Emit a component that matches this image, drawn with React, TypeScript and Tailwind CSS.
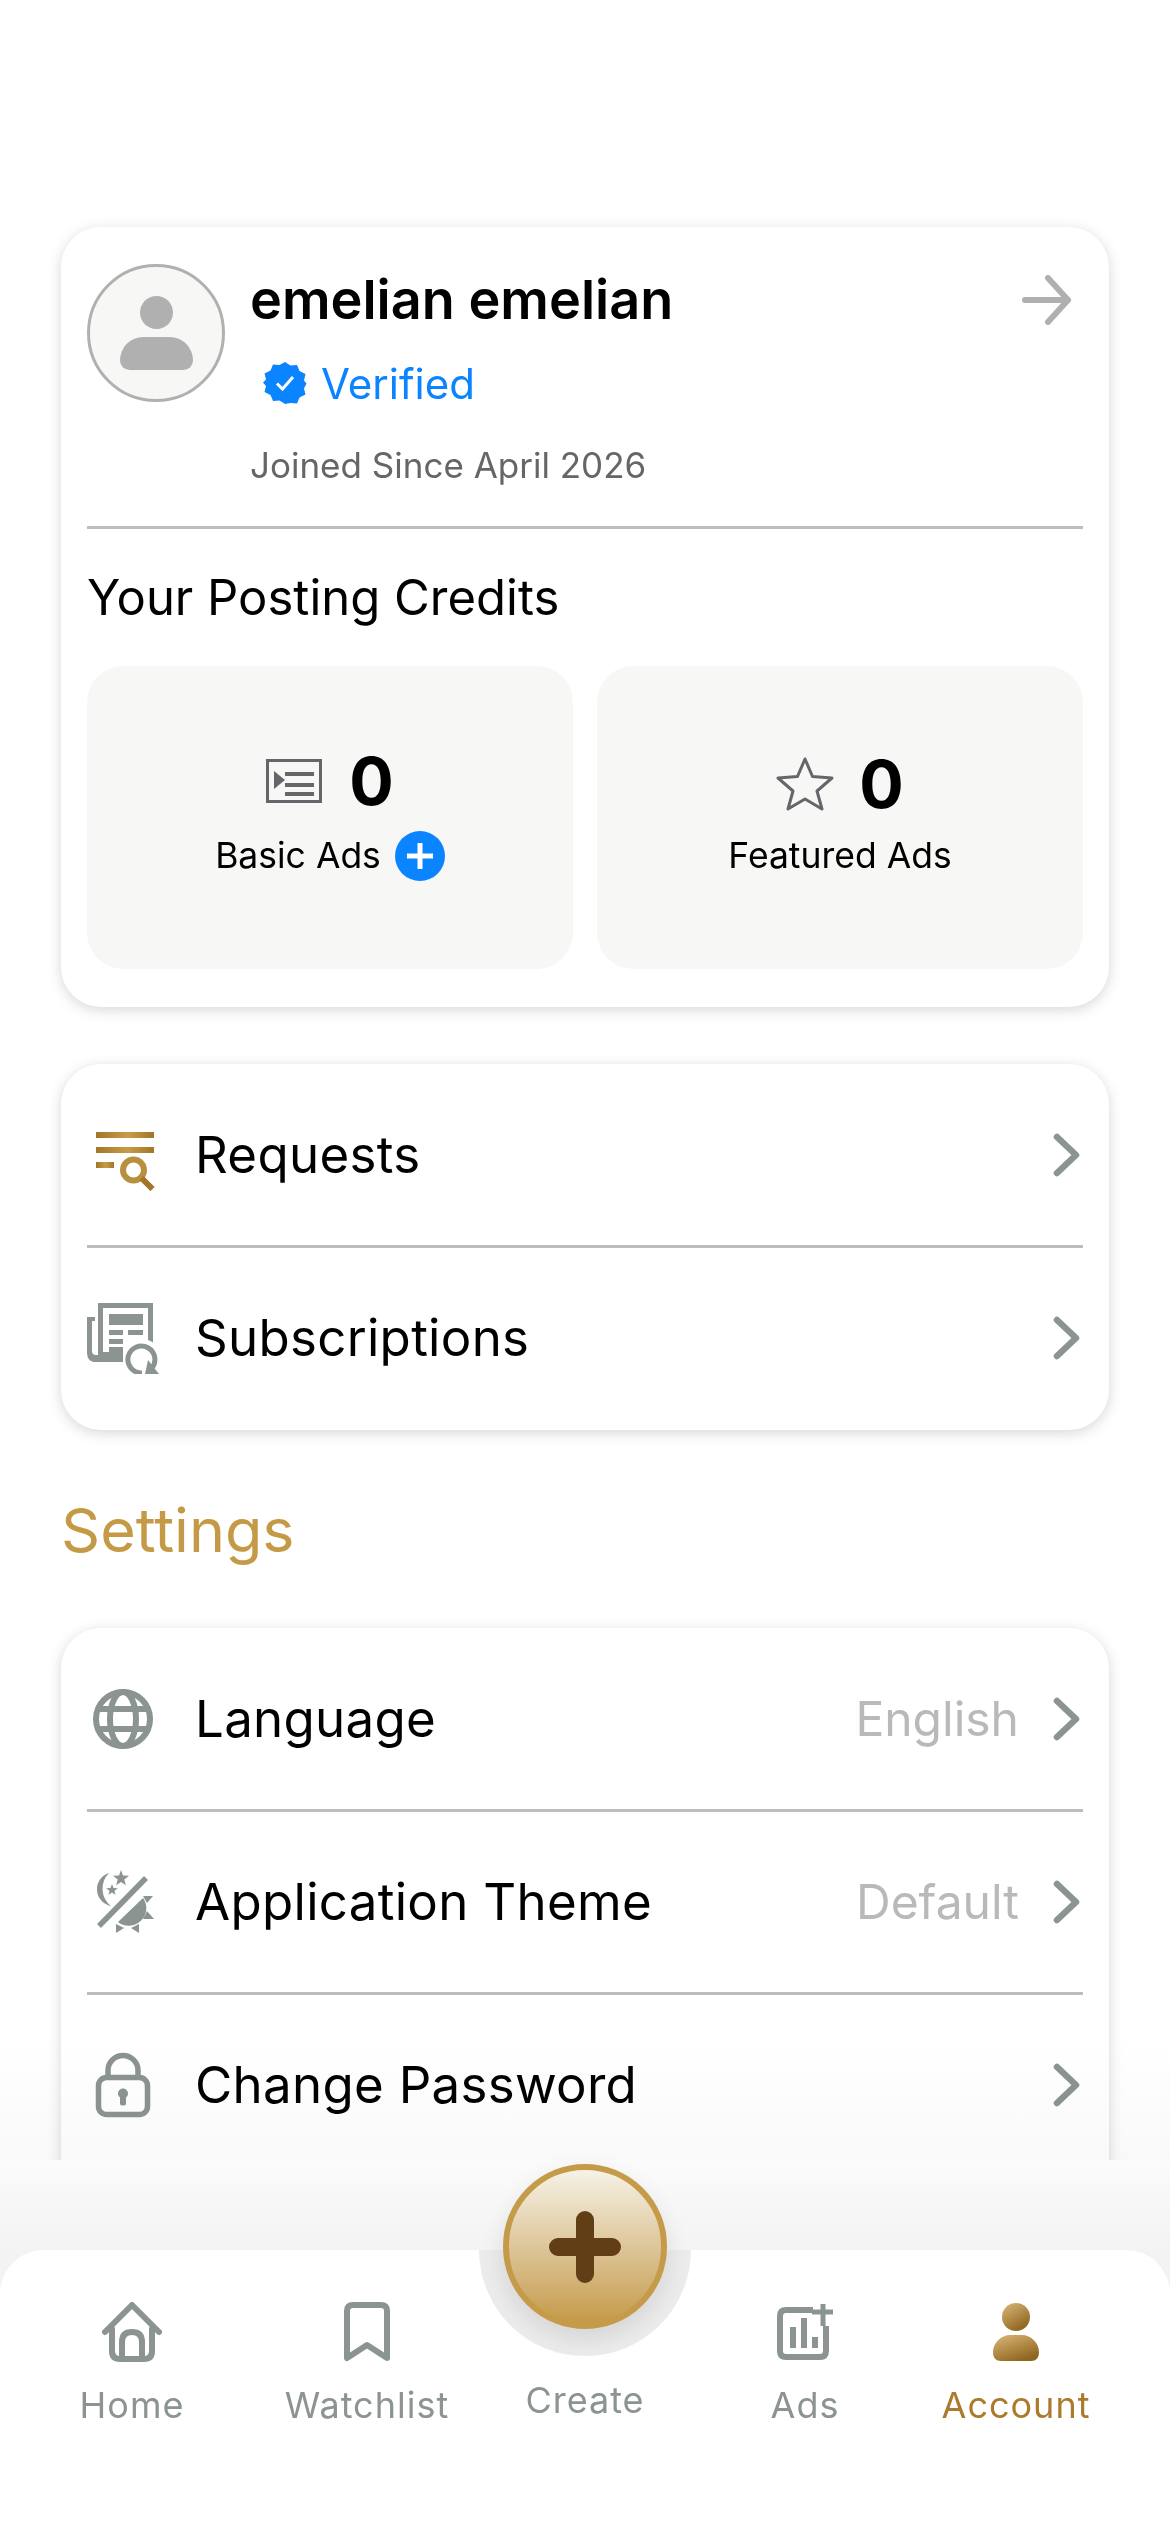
import type { ReactNode } from "react";

const font = "font-['Inter','Noto_Sans',sans-serif]";

function GoldDefs({ id, from, to }: { id: string; from: string; to: string }) {
  return (
    <defs>
      <linearGradient id={id} x1="0" y1="0" x2="0.6" y2="1">
        <stop offset="0" stopColor={from} />
        <stop offset="1" stopColor={to} />
      </linearGradient>
    </defs>
  );
}

function RequestsIcon() {
  return (
    <svg width="72" height="72" viewBox="0 0 72 72">
      <defs>
        <linearGradient id="reqGold" x1="0" y1="0" x2="1" y2="0">
          <stop offset="0" stopColor="#a27528" />
          <stop offset="0.55" stopColor="#c69c49" />
          <stop offset="1" stopColor="#a27528" />
        </linearGradient>
      </defs>
      <rect x="9" y="13" width="58" height="6" fill="url(#reqGold)" />
      <rect x="9" y="28" width="58" height="6" fill="url(#reqGold)" />
      <rect x="9" y="43" width="18" height="6" fill="url(#reqGold)" />
      <circle cx="46.5" cy="51" r="15.5" fill="#fff" />
      <circle cx="46.5" cy="51" r="10.5" fill="none" stroke="#b88f3d" strokeWidth="6" />
      <path d="M54.5 59l11 11" stroke="#a27528" strokeWidth="6" fill="none" />
    </svg>
  );
}

function SubscriptionsIcon() {
  return (
    <svg width="72" height="72" viewBox="0 0 72 72" fill="#8b9490">
      <path d="M11 1h55v40H61V6H16v44h20v5H11z" />
      <path d="M0 15h8v4H5v30q0 4 4 4h2v7H9q-9 0-9-9z" />
      <rect x="6" y="55" width="30" height="5" />
      <rect x="22" y="12" width="34" height="11" />
      <rect x="22" y="28" width="14" height="5" />
      <rect x="41" y="28" width="15" height="5" />
      <rect x="22" y="37" width="14" height="5" />
      <rect x="22" y="45" width="14" height="5" />
      <circle cx="55" cy="56" r="19" fill="#fff" />
      <path d="M64 67a13.5 13.5 0 1 0-9 4" fill="none" stroke="#8b9490" strokeWidth="5" />
      <path d="M61 58l11 14H58z" />
    </svg>
  );
}

function GlobeIcon() {
  return (
    <svg width="72" height="72" viewBox="0 0 72 72" fill="none" stroke="#8b9490" strokeWidth="6">
      <circle cx="36" cy="36" r="27" />
      <ellipse cx="36" cy="36" rx="13" ry="27" />
      <path d="M10 26h52M10 46h52" />
    </svg>
  );
}

function ThemeIcon() {
  return (
    <svg width="72" height="72" viewBox="0 0 72 72" fill="#8b9490">
      {/* moon and stars */}
      <path d="M22 7A17 17 0 0 0 24 40A22 22 0 0 1 22 7z" />
      <path d="M34 4l2 5.500 6 .3-4.700 3.700 1.600 5.700L34 16l-4.900 3.200 1.600-5.700L26 9.800l6-.3z" />
      <path d="M25 18l1.500 4 4.300.2-3.400 2.700 1.200 4.100-3.600-2.400-3.600 2.400 1.200-4.100-3.400-2.700 4.300-.2z" />
      {/* slash */}
      <path d="M59 12L12 60" stroke="#8b9490" strokeWidth="5.500" fill="none" />
      {/* half sun with rays */}
      <path d="M56 32A17.500 17.500 0 0 1 31 56z" />
      <path d="M56 30h10l-6 7zM60 45l7 8H56zM29 58l8 4-8 5zM44 62l8-4v9z" />
    </svg>
  );
}

function LockIcon() {
  return (
    <svg width="72" height="72" viewBox="0 0 72 72" fill="none" stroke="#8b9490" strokeWidth="5.500">
      <g transform="translate(0 3.500)">
        <rect x="11.500" y="25" width="49" height="37" rx="8" />
        <path d="M21 24v-6a15 15 0 0 1 30 0v6" />
        <circle cx="36" cy="41" r="5" fill="#8b9490" stroke="none" />
        <rect x="33" y="42" width="6" height="11" rx="2" fill="#8b9490" stroke="none" />
      </g>
    </svg>
  );
}

function Chevron() {
  return (
    <svg width="28" height="44" viewBox="0 0 28 44" fill="none" stroke="#8b9490" strokeWidth="6.500" strokeLinecap="round" strokeLinejoin="round">
      <path d="M4 4l19 18L4 40" />
    </svg>
  );
}

function Row({ icon, label, value }: { icon: ReactNode; label: string; value?: string }) {
  return (
    <div className="flex h-[180px] items-center pr-[28px] pl-[26px]">
      <div className="flex w-[72px] shrink-0 items-center justify-center">{icon}</div>
      <span className="ml-[36px] flex-1 text-[51px] font-[430] tracking-[0.3px] text-black">{label}</span>
      {value && <span className="mr-[34px] text-[48px] text-[#b9b9b9]">{value}</span>}
      <Chevron />
    </div>
  );
}

function Divider() {
  return <div className="mx-[26px] h-[3px] bg-[#bdbdbd]" />;
}

function CreditBox({ icon, label, extra, rowClass, top }: { icon: ReactNode; label: string; extra?: ReactNode; rowClass: string; top: string }) {
  return (
    <div className={`flex h-[303px] flex-1 flex-col items-center rounded-[36px] bg-[#f7f7f5] ${top}`}>
      <div className={`flex h-[80px] items-center ${rowClass}`}>
        {icon}
        <span className="text-[66px] leading-none font-bold text-black">0</span>
      </div>
      <div className="flex h-[50px] items-center gap-[14px]">
        <span className="text-[35.5px] text-black">{label}</span>
        {extra}
      </div>
    </div>
  );
}

function NavItem({ icon, label, active }: { icon: ReactNode; label: string; active?: boolean }) {
  return (
    <div className="flex flex-col items-center">
      <div className="flex h-[60px] items-center justify-center">{icon}</div>
      <span className={`mt-[21px] text-[36px] leading-[44px] tracking-[1px] ${active ? "text-[#ab7a2c]" : "text-[#8b9490]"}`}>
        {label}
      </span>
    </div>
  );
}

export default function App() {
  return (
    <div className={`${font} relative flex h-[2532px] w-[1170px] flex-col overflow-hidden bg-white`}>
      {/* Scrolling content */}
      <div className="h-[2160px] shrink-0 overflow-hidden px-[61px] pt-[227px]">
        <div className="h-[780px] rounded-[40px] bg-white pt-[37px] shadow-[0_3px_14px_rgba(0,0,0,0.16)]">
          <div className="flex h-[262px] pr-[37px] pl-[26px]">
            <div className="flex h-[138px] w-[138px] shrink-0 flex-col items-center rounded-full border-[3px] border-[#b0b0b0] bg-[#f7f7f5] pt-[29px]">
              <div className="h-[33px] w-[33px] rounded-full bg-[#b0b0b0]" />
              <div className="mt-[8px] h-[33px] w-[73px] rounded-t-[24px] rounded-b-[10px] bg-[#b0b0b0]" />
            </div>
            <div className="ml-[25px] flex-1 pt-[14px]">
              <div className="text-[54px] leading-[44px] font-semibold whitespace-nowrap text-black">emelian emelian</div>
              <div className="mt-[39px] flex h-[44px] items-center pl-[13px]">
                <svg width="44" height="44" viewBox="0 0 44 44">
                  <path
                    d="M22 1l5.500 3.500 6.500-.5 2.500 6 6 3-1.500 6.500 2.500 3-2.500 5 1.500 6-6 3-2.500 6-6.500-.5L22 43l-5.500-3.500-6.500.5-2.500-6-6-3 1.500-6L0 21.500l3-3-1.500-6 6-3 2.500-6 6.500.5z"
                    fill="#0a84ff"
                  />
                  <path d="M14 22.500l5.500 5.500L30 16" fill="none" stroke="#fff" strokeWidth="3" />
                </svg>
                <span className="ml-[14px] text-[42px] text-[#0a84ff]">Verified</span>
              </div>
              <div className="mt-[38px] text-[35px] leading-[44px] text-[#666666]">Joined Since April 2026</div>
            </div>
            <svg width="50" height="50" viewBox="0 0 50 50" fill="none" stroke="#b0b0b0" strokeWidth="6" strokeLinecap="round" strokeLinejoin="round" className="mt-[11px] shrink-0">
              <path d="M3 25h43M26 3l20 22-20 22" />
            </svg>
          </div>
          <Divider />
          <div className="mt-[41px] px-[26px] text-[49px] leading-[56px] font-normal text-black">Your Posting Credits</div>
          <div className="mt-[40px] flex gap-[24px] px-[26px]">
            <CreditBox
              top="pt-[75px]"
              rowClass="mb-[10px] gap-[27px]"
              label="Basic Ads"
              icon={
                <svg width="56" height="44" viewBox="0 0 56 44" fill="#66666a">
                  <path d="M0 0h56v44H0zM3 3v38h50V3z" fillRule="evenodd" />
                  <path d="M8 12l11 9-11 9z" />
                  <rect x="19" y="13" width="29" height="4" />
                  <rect x="19" y="24" width="29" height="4" />
                  <rect x="19" y="33" width="29" height="4" />
                </svg>
              }
              extra={
                <span className="flex h-[50px] w-[50px] items-center justify-center rounded-full bg-[#0a84ff]">
                  <svg width="26" height="26" viewBox="0 0 26 26" stroke="#fff" strokeWidth="5">
                    <path d="M13 0v26M0 13h26" />
                  </svg>
                </span>
              }
            />
            <CreditBox
              top="pt-[78px]"
              rowClass="mb-[7px] gap-[25px]"
              label="Featured Ads"
              icon={
                <svg width="58" height="54" viewBox="0 0 58 54" fill="none" stroke="#66666a" strokeWidth="3" strokeLinejoin="round">
                  <path d="M29 2l7.500 17.500 19.500 1.500-15 13 5 18L29 42l-17 10 5-18L2 21l19.500-1.500z" />
                </svg>
              }
            />
          </div>
        </div>

        <div className="mt-[57px] rounded-[40px] bg-white pt-[1px] pb-[2px] shadow-[0_3px_14px_rgba(0,0,0,0.16)]">
          <Row icon={<RequestsIcon />} label="Requests" />
          <Divider />
          <Row icon={<SubscriptionsIcon />} label="Subscriptions" />
        </div>

        <div className="mt-[64px] text-[61px] leading-[72px] text-[#c49a47]">Settings</div>

        <div className="mt-[62px] rounded-[40px] bg-white pt-[1px] pb-[60px] shadow-[0_3px_14px_rgba(0,0,0,0.16)]">
          <Row icon={<GlobeIcon />} label="Language" value="English" />
          <Divider />
          <Row icon={<ThemeIcon />} label="Application Theme" value="Default" />
          <Divider />
          <Row icon={<LockIcon />} label="Change Password" />
        </div>
      </div>

      {/* Fade above the tab bar */}
      <div className="pointer-events-none absolute top-[2040px] left-0 h-[120px] w-full bg-gradient-to-b from-white to-[#f9f9f9] mix-blend-multiply" />

      {/* Tab bar */}
      <div className="relative flex-1 bg-[#f3f3f3]">
        <div className="h-[90px] bg-gradient-to-b from-[#fbfbfb] to-[#f3f3f3]" />
        <div className="grid h-[282px] grid-cols-[264px_206px_230px_210px_212px] rounded-t-[44px] bg-white pt-[52px]">
          <NavItem
            label="Home"
            icon={
              <svg width="60" height="60" viewBox="0 0 60 60" fill="none" stroke="#8b9490" strokeWidth="6" strokeLinecap="round" strokeLinejoin="round">
                <path d="M3 30L30 3l27 27" />
                <path d="M10 27v22q0 8 8 8h24q8 0 8-8V27" />
                <path d="M20 56V40q0-10 10-10t10 10v16" />
              </svg>
            }
          />
          <NavItem
            label="Watchlist"
            icon={
              <svg width="46" height="60" viewBox="0 0 46 60" fill="none" stroke="#8b9490" strokeWidth="6" strokeLinejoin="round">
                <path d="M3 56V9q0-6 6-6h28q6 0 6 6v47L23 43z" />
              </svg>
            }
          />
          <div className="flex flex-col items-center pt-[76px]">
            <span className="text-[36px] leading-[44px] tracking-[1px] text-[#8b9490]">Create</span>
          </div>
          <NavItem
            label="Ads"
            icon={
              <svg width="56" height="56" viewBox="0 0 56 56" fill="none" stroke="#8b9490" strokeWidth="6">
                <path d="M36 6H9q-6 0-6 6v35q0 6 6 6h34q6 0 6-6V22" strokeLinejoin="round" />
                <path d="M13 44V23h6v21zM24 44V14h6v30zM35 44V33h6v11z" fill="#8b9490" stroke="none" />
                <path d="M46 0v22M35 8h21" strokeWidth="5" />
              </svg>
            }
          />
          <NavItem
            label="Account"
            active
            icon={
              <svg width="46" height="58" viewBox="0 0 46 58">
                <GoldDefs id="acctGold" from="#dcb878" to="#8f6620" />
                <circle cx="23" cy="14" r="14" fill="url(#acctGold)" />
                <path d="M17 32h12c9 0 17 8 17 17 0 6-3 9-8 9H8c-5 0-8-3-8-9 0-9 8-17 17-17z" fill="url(#acctGold)" />
              </svg>
            }
          />
        </div>

        {/* Raised create button */}
        <div className="absolute top-[90px] left-[479px] h-[106px] w-[212px] rounded-b-full bg-[#ececec]" />
        <button className="absolute top-[4px] left-[503px] flex h-[165px] w-[164px] items-center justify-center rounded-full border-[6px] border-[#c59b4a] bg-gradient-to-b from-[#f6f2e6] to-[#c49a47] shadow-[0_10px_24px_rgba(0,0,0,0.1)]">
          <svg width="72" height="72" viewBox="0 0 72 72" stroke="#623e17" strokeWidth="18" strokeLinecap="round">
            <path d="M36 9v54M9 36h54" />
          </svg>
        </button>
      </div>
    </div>
  );
}
